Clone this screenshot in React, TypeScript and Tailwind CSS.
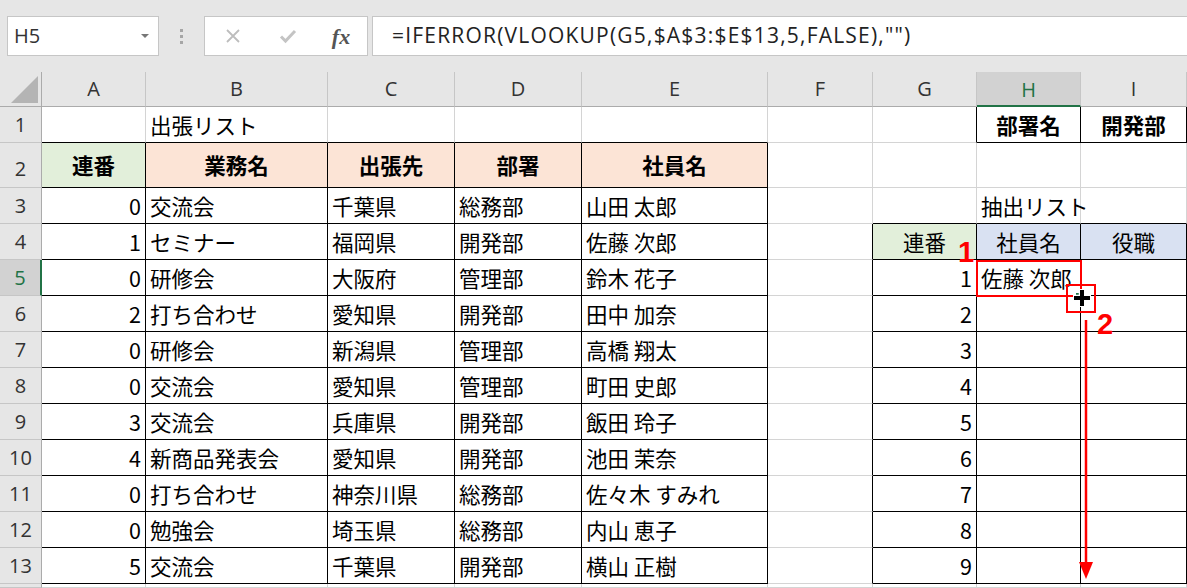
import React from 'react';

const COLS = ['A', 'B', 'C', 'D', 'E', 'F', 'G', 'H', 'I'];

type Cell = {
  v?: string;
  align?: 'l' | 'c' | 'r';
  bold?: boolean;
  bg?: string;
};

// sheet rows 1..13, columns A..I
const rows: Cell[][] = [
  [{}, { v: '出張リスト' }, {}, {}, {}, {}, {}, { v: '部署名', align: 'c', bold: true }, { v: '開発部', align: 'c', bold: true }],
  [
    { v: '連番', align: 'c', bold: true, bg: 'bg-[#e2efda]' },
    { v: '業務名', align: 'c', bold: true, bg: 'bg-[#fce4d6]' },
    { v: '出張先', align: 'c', bold: true, bg: 'bg-[#fce4d6]' },
    { v: '部署', align: 'c', bold: true, bg: 'bg-[#fce4d6]' },
    { v: '社員名', align: 'c', bold: true, bg: 'bg-[#fce4d6]' },
    {}, {}, {}, {},
  ],
];

const data = [
  ['0', '交流会', '千葉県', '総務部', '山田 太郎'],
  ['1', 'セミナー', '福岡県', '開発部', '佐藤 次郎'],
  ['0', '研修会', '大阪府', '管理部', '鈴木 花子'],
  ['2', '打ち合わせ', '愛知県', '開発部', '田中 加奈'],
  ['0', '研修会', '新潟県', '管理部', '高橋 翔太'],
  ['0', '交流会', '愛知県', '管理部', '町田 史郎'],
  ['3', '交流会', '兵庫県', '開発部', '飯田 玲子'],
  ['4', '新商品発表会', '愛知県', '開発部', '池田 茉奈'],
  ['0', '打ち合わせ', '神奈川県', '総務部', '佐々木 すみれ'],
  ['0', '勉強会', '埼玉県', '総務部', '内山 恵子'],
  ['5', '交流会', '千葉県', '開発部', '横山 正樹'],
];

data.forEach((d, i) => {
  const r = i + 3;
  const row: Cell[] = [
    { v: d[0], align: 'r' },
    { v: d[1] },
    { v: d[2] },
    { v: d[3] },
    { v: d[4] },
    {},
  ];
  if (r === 3) row.push({}, { v: '抽出リスト' }, {});
  else if (r === 4)
    row.push(
      { v: '連番', align: 'c', bg: 'bg-[#e2efda]' },
      { v: '社員名', align: 'c', bg: 'bg-[#d9e1f2]' },
      { v: '役職', align: 'c', bg: 'bg-[#d9e1f2]' },
    );
  else row.push({ v: String(r - 4), align: 'r' }, r === 5 ? { v: '佐藤 次郎' } : {}, {});
  rows.push(row);
});

// bordered ranges: A2:E13, G4:I13, H1:I1
const inRange = (r: number, c: number) =>
  (r >= 2 && r <= 13 && c >= 1 && c <= 5) ||
  (r >= 4 && r <= 13 && c >= 7 && c <= 9) ||
  (r === 1 && c >= 8 && c <= 9);

const rowH = (r: number) => (r === 2 ? 'h-[45px]' : r === 14 ? 'h-[4px]' : 'h-[36px]');

const App: React.FC = () => {
  return (
    <div className="relative w-[1187px] h-[588px] overflow-hidden bg-[#e6e6e6] font-['Noto_Sans_CJK_JP',sans-serif] text-black">
      {/* formula bar */}
      <div className="flex h-[72px] items-start pt-[16px]">
        <div className="ml-[7px] flex h-[40px] w-[152px] items-center justify-between border border-[#c6c6c6] bg-white pl-[6px] pr-[9px]">
          <span className="font-['Open_Sans',sans-serif] text-[20px] text-[#333]">H5</span>
          <span className="h-0 w-0 border-x-[4px] border-t-[4px] border-x-transparent border-t-[#777]" />
        </div>
        <div className="flex h-[40px] w-[45px] flex-col items-center justify-center gap-[3px]">
          <span className="h-[3px] w-[3px] bg-[#a6a6a6]" />
          <span className="h-[3px] w-[3px] bg-[#a6a6a6]" />
          <span className="h-[3px] w-[3px] bg-[#a6a6a6]" />
        </div>
        <div className="flex h-[40px] w-[164px] items-center border border-[#c6c6c6] bg-white">
          <div className="flex w-[55px] justify-center">
            <svg width="16" height="16" viewBox="0 0 16 16">
              <path d="M2 2L14 14M14 2L2 14" stroke="#bdbdbd" strokeWidth="1.8" fill="none" />
            </svg>
          </div>
          <div className="flex w-[55px] justify-center">
            <svg width="18" height="16" viewBox="0 0 18 16">
              <path d="M2 8.5L6.5 13L16 3" stroke="#c4c4c4" strokeWidth="3" fill="none" />
            </svg>
          </div>
          <div className="flex w-[52px] justify-center font-['Liberation_Serif',serif] text-[22px] font-bold italic text-[#555]">
            fx
          </div>
        </div>
        <div className="ml-[4px] flex h-[40px] flex-1 items-center border-y border-l border-[#c6c6c6] bg-white pl-[19px] font-['Open_Sans',sans-serif] text-[21px] tracking-[1.2px] text-[#222]">
          =IFERROR(VLOOKUP(G5,$A$3:$E$13,5,FALSE),"")
        </div>
      </div>

      {/* sheet */}
      <div className="grid grid-cols-[42px_104px_182px_127px_127px_186px_105px_104px_104px_106px] bg-white">
        {/* column headers */}
        <div className="relative h-[35px] border-r border-b border-r-[#ababab] border-b-[#ababab] bg-[#e6e6e6]">
          <svg className="absolute right-[3px] bottom-[3px]" width="27" height="27" viewBox="0 0 27 27">
            <path d="M27 0L27 27L0 27Z" fill="#b4b4b4" />
          </svg>
        </div>
        {COLS.map((c) =>
          c === 'H' ? (
            <div
              key={c}
              className="flex h-[35px] items-center justify-center border-r border-b-2 border-r-[#c6c6c6] border-b-[#217346] bg-[#d2d2d2] pt-[2px] font-['Open_Sans',sans-serif] text-[20px] text-[#217346]"
            >
              {c}
            </div>
          ) : (
            <div
              key={c}
              className="flex h-[35px] items-center justify-center border-r border-b border-r-[#c6c6c6] border-b-[#ababab] bg-[#e6e6e6] font-['Open_Sans',sans-serif] text-[20px] text-[#333]"
            >
              {c}
            </div>
          ),
        )}

        {[...rows, Array(9).fill({}) as Cell[]].map((row, ri) => {
          const r = ri + 1;
          return (
            <React.Fragment key={r}>
              <div
                className={
                  r === 5
                    ? 'flex h-[36px] items-center justify-center border-r-2 border-b border-r-[#217346] border-b-[#c6c6c6] bg-[#d2d2d2] font-[\'Open_Sans\',sans-serif] text-[20px] text-[#217346]'
                    : `flex ${rowH(r)} items-center justify-center border-r border-b border-r-[#ababab] border-b-[#c6c6c6] bg-[#e6e6e6] font-['Open_Sans',sans-serif] text-[20px] text-[#333] ${r === 2 ? 'pt-[8px]' : ''}`
                }
              >
                {r <= 13 ? r : ''}
              </div>
              {row.map((cell, ci) => {
                const c = ci + 1;
                const rb = inRange(r, c) || inRange(r, c + 1) ? 'border-r-black' : 'border-r-[#d4d4d4]';
                const bb = inRange(r, c) || inRange(r + 1, c) ? 'border-b-black' : 'border-b-[#d4d4d4]';
                const al =
                  cell.align === 'c' ? 'justify-center' : cell.align === 'r' ? 'justify-end pr-[4px]' : 'justify-start pl-[4px]';
                return (
                  <div
                    key={c}
                    className={`flex ${rowH(r)} items-center overflow-visible whitespace-nowrap border-r border-b ${rb} ${bb} ${al} ${cell.bg ?? ''} ${cell.bold ? 'font-bold' : ''} text-[21.5px] leading-none`}
                  >
                    {cell.v}
                  </div>
                );
              })}
            </React.Fragment>
          );
        })}
      </div>

      {/* annotations */}
      <div className="absolute left-[976px] top-[260px] h-[37px] w-[106px] border-2 border-[#ff0000]" />
      <div className="absolute left-[1066px] top-[284px] h-[29px] w-[30px] border-2 border-[#ff0000]" />
      <span className="absolute left-[958px] top-[241px] font-['Liberation_Sans',sans-serif] text-[29px] font-bold leading-[0.8] text-[#ff0000]">
        1
      </span>
      <span className="absolute left-[1097px] top-[313px] font-['Liberation_Sans',sans-serif] text-[29px] font-bold leading-[0.8] text-[#ff0000]">
        2
      </span>
      <svg className="absolute left-0 top-0" width="1187" height="588" viewBox="0 0 1187 588">
        <rect x="1076" y="293" width="3" height="3" fill="#217346" />
        <path d="M1073 298H1091M1082 289V307" stroke="#fff" strokeWidth="6.5" />
        <path d="M1074 298H1090M1082 290V306" stroke="#000" strokeWidth="4" />
        <path d="M1086 320V566" stroke="#ff0000" strokeWidth="2.5" />
        <path d="M1079 562L1093 562L1086 579Z" fill="#ff0000" />
      </svg>
    </div>
  );
};

export default App;
